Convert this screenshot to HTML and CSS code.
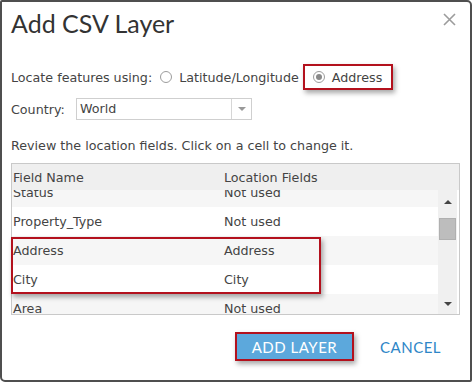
FILE: index.html
```html
<!DOCTYPE html>
<html lang="en">
<head>
    <meta charset="UTF-8">
    <title>Add CSV Layer</title>
    <link rel="stylesheet" href="styles.css">
</head>
<body>
    <div class="dialog">
        <div class="dialog-head">
            <div class="title">Add CSV Layer</div>
            <svg class="close" width="13" height="13" viewBox="0 0 13 13">
                <path d="M1 1 L12 12 M12 1 L1 12" stroke="#9c9c9c" stroke-width="1.6" fill="none"/>
            </svg>
        </div>

        <div class="locate">
            <span>Locate features using:</span>
            <span class="radio"></span>
            <span>Latitude/Longitude</span>
            <span class="note note-radio">
                <span class="radio checked"></span>
                <span>Address</span>
            </span>
        </div>

        <div class="country">
            <span class="country-label">Country:</span>
            <div class="select">
                <span class="select-value">World</span>
                <span class="select-arrow"></span>
            </div>
        </div>

        <div class="review">Review the location fields. Click on a cell to change it.</div>

        <!-- field grid -->
        <div class="grid">
            <div class="grid-head">
                <span class="col-name">Field Name</span>
                <span class="col-loc">Location Fields</span>
            </div>
            <div class="grid-body">
                <div class="rows">
                    <div class="rows-inner">
                        <div class="row alt"><span class="col-name">Status</span><span class="col-loc">Not used</span></div>
                        <div class="row"><span class="col-name">Property_Type</span><span class="col-loc">Not used</span></div>
                        <div class="row alt"><span class="col-name">Address</span><span class="col-loc">Address</span></div>
                        <div class="row"><span class="col-name">City</span><span class="col-loc">City</span></div>
                        <div class="row alt"><span class="col-name">Area</span><span class="col-loc">Not used</span></div>
                    </div>
                </div>
                <div class="scrollbar">
                    <span class="arrow up"></span>
                    <span class="thumb"></span>
                    <span class="track"></span>
                    <span class="arrow down"></span>
                </div>
            </div>
            <div class="note note-rows"></div>
        </div>

        <div class="footer">
            <button class="btn-add">ADD LAYER</button>
            <button class="btn-cancel">CANCEL</button>
        </div>
    </div>
</body>
</html>
```

FILE: styles.css
```css
body {
    margin: 0;
    background-color: #fff;
    font-family: "DejaVu Sans", Verdana, sans-serif;
    font-size: 12.7px;
    color: #444;
}

.dialog {
    width: 472px;
    height: 382px;
    box-sizing: border-box;
    border: 2px solid #4f4f4f;
    border-radius: 2px 5px 2px 5px;
    padding: 0 11px 0 9px;
    background-color: #fff;
}

.dialog-head {
    display: flex;
    justify-content: space-between;
    align-items: flex-start;
    height: 58px;
}

.title {
    font-family: Lato, "Open Sans", sans-serif;
    font-size: 25px;
    color: #333;
    margin-top: 6px;
}

.close {
    margin-top: 11px;
    margin-right: 3px;
}

.locate {
    display: flex;
    align-items: center;
    height: 26px;
    margin-top: 4px;
}

.radio {
    width: 12px;
    height: 12px;
    border: 1px solid #9c9c9c;
    border-radius: 50%;
    margin: 0 7px 0 8px;
    background-color: #fff;
    box-sizing: border-box;
    display: inline-flex;
    align-items: center;
    justify-content: center;
}

.radio.checked::after {
    content: "";
    width: 6px;
    height: 6px;
    border-radius: 50%;
    background-color: #8a8a8a;
}

.note {
    border: 2px solid #b3111d;
    box-shadow: 2px 3px 5px rgba(0, 0, 0, 0.35);
}

.note-radio {
    display: flex;
    align-items: center;
    height: 26px;
    box-sizing: border-box;
    margin-left: 4px;
    padding: 0 9px 0 0;
}

.country {
    display: flex;
    align-items: center;
    margin-top: 8px;
    height: 22px;
}

.country-label {
    width: 65px;
}

.select {
    display: flex;
    width: 176px;
    height: 22px;
    box-sizing: border-box;
    border: 1px solid #cfcfcf;
}

.select-value {
    flex: 1;
    padding-left: 3px;
    line-height: 19px;
    color: #444;
}

.select-arrow {
    width: 19px;
    border-left: 1px solid #d6d6d6;
    display: flex;
    align-items: center;
    justify-content: center;
}

.select-arrow::after {
    content: "";
    border-left: 4px solid transparent;
    border-right: 4px solid transparent;
    border-top: 4px solid #999;
}

.review {
    margin-top: 18px;
    height: 16px;
    line-height: 16px;
}

/* field grid */
.grid {
    position: relative;
    margin-top: 9px;
    width: 449px;
    height: 152px;
    box-sizing: border-box;
    border: 1px solid #c9c9c9;
    display: flex;
    flex-direction: column;
}

.grid-head {
    display: flex;
    height: 26px;
    align-items: center;
    background-color: #efefef;
    flex-shrink: 0;
}

.col-name {
    width: 211px;
    padding-left: 1px;
}

.col-loc {
    flex: 1;
}

.grid-body {
    display: flex;
    flex: 1;
    overflow: hidden;
}

.rows {
    flex: 1;
    overflow: hidden;
}

.rows-inner {
    margin-top: -12px;
}

.row {
    display: flex;
    align-items: center;
    height: 29px;
    background-color: #fff;
}

.row.alt {
    background-color: #f6f6f6;
}

.scrollbar {
    width: 19px;
    margin-right: 2px;
    background-color: #f0f0f0;
    display: flex;
    flex-direction: column;
    align-items: center;
}

.arrow {
    height: 16px;
    display: flex;
    align-items: center;
    justify-content: center;
    margin-top: 4px;
}

.arrow.up::after {
    content: "";
    border-left: 4px solid transparent;
    border-right: 4px solid transparent;
    border-bottom: 4px solid #444;
}

.arrow.down::after {
    content: "";
    border-left: 4px solid transparent;
    border-right: 4px solid transparent;
    border-top: 4px solid #444;
}

.thumb {
    width: 17px;
    height: 22px;
    margin-top: 8px;
    background-color: #bdbdbd;
    border: 1px solid #b0b0b0;
    box-sizing: border-box;
}

.track {
    flex: 1;
}

.arrow.down {
    margin: 0 0 2px;
}

.note-rows {
    position: absolute;
    left: -1px;
    top: 73px;
    width: 310px;
    height: 57px;
    box-sizing: border-box;
}

.footer {
    display: flex;
    align-items: center;
    margin-top: 17px;
    padding-left: 224px;
}

.btn-add {
    width: 119px;
    height: 29px;
    border: 2px solid #b3111d;
    background-color: #5ca8dc;
    color: #fff;
    font-family: Lato, "Open Sans", sans-serif;
    font-size: 15px;
    letter-spacing: 0.5px;
    box-shadow: 2px 3px 5px rgba(0, 0, 0, 0.35);
    padding: 0;
}

.btn-cancel {
    margin-left: 26px;
    border: none;
    background: none;
    color: #2e86c7;
    font-family: Lato, "Open Sans", sans-serif;
    font-size: 15px;
    letter-spacing: 0.5px;
    padding: 0;
}
```
